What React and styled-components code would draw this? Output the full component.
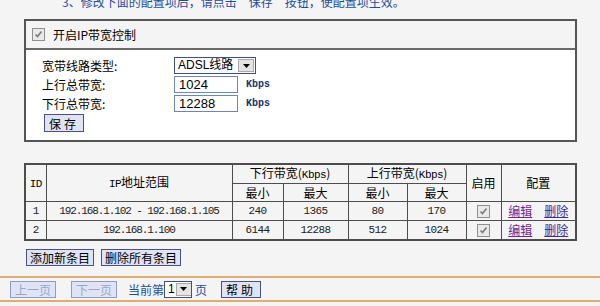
import styled, { createGlobalStyle } from 'styled-components';

const GlobalStyle = createGlobalStyle`
  html, body {
    margin: 0;
    padding: 0;
    background: #f4f4f4;
    overflow: hidden;
  }
  body {
    font-family: "Noto Sans CJK SC", "Noto Sans", sans-serif;
    font-size: 12px;
    color: #000;
  }
`;

const Page = styled.div`
  width: 600px;
  height: 306px;
  overflow: hidden;
`;

const Note = styled.div`
  margin-top: -5px;
  padding-left: 62px;
  height: 14px;
  line-height: 14px;
  color: #1f4d9e;
  font-size: 12px;
  white-space: nowrap;
`;

const Panel = styled.div`
  margin: 10px 23px 0 24px;
  border: 2px solid #555;
  background: #f4f4f4;
`;

const PanelHead = styled.div`
  height: 27px;
  display: flex;
  align-items: center;
  gap: 8px;
  padding-left: 6px;
  border-bottom: 2px solid #6a6a6a;
  box-shadow: 0 1px 0 #cfcfcf;
`;

const PanelBody = styled.div`
  background: #fff;
  padding: 7px 0 8px 16px;
  display: grid;
  grid-template-columns: 132px auto;
  row-gap: 2px;
  align-items: center;
  justify-content: start;
`;

const Label = styled.span`
  line-height: 17px;
  white-space: nowrap;
`;

const Field = styled.div`
  display: flex;
  align-items: center;
  gap: 8px;
`;

const Select = styled.div`
  display: flex;
  align-items: stretch;
  width: ${p => p.$w}px;
  height: ${p => p.$h}px;
  border: 1px solid #3c4f86;
  background: #fff;
  box-sizing: border-box;
  font-family: "Liberation Sans", "Noto Sans CJK SC", sans-serif;
  font-size: 12px;
  white-space: nowrap;
  overflow: hidden;
`;

const SelectText = styled.span`
  flex: 1;
  padding-left: 3px;
  line-height: ${p => p.$h - 2}px;
`;

const SelectArrow = styled.span`
  width: 14px;
  flex: none;
  margin: 1px;
  background: #e4e4e4;
  border: 1px solid #a9a9a9;
  display: flex;
  align-items: center;
  justify-content: center;
`;

const TextInput = styled.div`
  width: 64px;
  height: 17px;
  box-sizing: border-box;
  border: 1px solid #6d84c0;
  background: #fff;
  padding-left: 4px;
  font-family: "Liberation Sans", sans-serif;
  font-size: 13px;
  line-height: 15px;
`;

const Unit = styled.span`
  font-family: "Liberation Mono", monospace;
  font-weight: bold;
  font-size: 10px;
  color: #1a3170;
`;

const Button = styled.button`
  height: ${p => p.$h || 17}px;
  padding: 0 ${p => p.$px || 4}px;
  border: 1px solid ${p => (p.disabled ? '#8e9bc4' : '#4a4f86')};
  background: #dfe3f3;
  color: ${p => (p.disabled ? '#98a6cd' : '#000')};
  font-family: "Noto Sans CJK SC", sans-serif;
  font-size: 12px;
  line-height: 15px;
  letter-spacing: ${p => p.$ls || 0}px;
  white-space: nowrap;
  cursor: pointer;
`;

const SaveRow = styled.div`
  grid-column: 1 / 3;
  padding-left: 2px;
`;

const Table = styled.table`
  margin: 21px 0 0 24px;
  width: 553px;
  table-layout: fixed;
  border-collapse: collapse;
  border: 2px solid #4d4d4d;
  background: #f4f4f4;
`;

const Th = styled.th`
  border: 1px solid #4d4d4d;
  font-weight: normal;
  height: 17px;
  padding: 0;
  text-align: center;
  font-size: 12px;
  line-height: 16px;
  white-space: nowrap;
`;

const Td = styled.td`
  border: 1px solid #4d4d4d;
  height: 18px;
  padding: 0;
  text-align: center;
  font-family: "Liberation Mono", monospace;
  font-size: 11px;
  line-height: 16px;
  letter-spacing: ${p => p.$ls ?? -0.6}px;
  color: #222;
  white-space: nowrap;
`;

const Mono = styled.span`
  font-family: "Liberation Mono", monospace;
  font-size: 11px;
  letter-spacing: -0.5px;
`;

const Links = styled.div`
  display: flex;
  justify-content: center;
  gap: 12px;
  font-family: "Noto Sans CJK SC", sans-serif;
  font-size: 12px;
  letter-spacing: 0;
`;

const Link = styled.a`
  color: ${p => p.$c};
  text-decoration: underline;
  cursor: pointer;
`;

const Box = styled.span`
  display: inline-flex;
  width: 11px;
  height: 11px;
  border: 1px solid #8f8f8f;
  background: #e9e9e9;
  align-items: center;
  justify-content: center;
  vertical-align: middle;
`;

const Actions = styled.div`
  display: flex;
  gap: 7px;
  margin: 8px 0 0 26px;
`;

const Pager = styled.div`
  margin-top: 10px;
  height: 22px;
  border-top: 2px solid #e2ab70;
  border-bottom: 2px solid #e2ab70;
  display: flex;
  align-items: center;
  padding-left: 10px;
`;

const PagerText = styled.span`
  color: #1f4d9e;
  white-space: nowrap;
  margin: 0 ${p => p.$mr || 0}px 0 ${p => p.$ml || 0}px;
`;

const Arrow = () => (
  <svg width="7" height="4" viewBox="0 0 7 4">
    <path d="M0 0h7L3.5 4z" fill="#000" />
  </svg>
);

const Check = () => (
  <Box>
    <svg width="9" height="9" viewBox="0 0 9 9">
      <path d="M1.5 4.5l2 2 4-5" stroke="#7a7a7a" strokeWidth="1.6" fill="none" />
    </svg>
  </Box>
);

const rows = [
  { id: 1, range: '192.168.1.102 - 192.168.1.105', dmin: 240, dmax: 1365, umin: 80, umax: 170 },
  { id: 2, range: '192.168.1.100', dmin: 6144, dmax: 12288, umin: 512, umax: 1024 },
];

export default function App() {
  return (
    <Page>
      <GlobalStyle />
      <Note>3、修改下面的配置项后，请点击“保存”按钮，使配置项生效。</Note>

      <Panel>
        <PanelHead>
          <Check />
          <span>开启IP带宽控制</span>
        </PanelHead>
        <PanelBody>
          <Label>宽带线路类型:</Label>
          <Select $w={82} $h={17}>
            <SelectText $h={17}>ADSL线路</SelectText>
            <SelectArrow><Arrow /></SelectArrow>
          </Select>
          <Label>上行总带宽:</Label>
          <Field>
            <TextInput>1024</TextInput>
            <Unit>Kbps</Unit>
          </Field>
          <Label>下行总带宽:</Label>
          <Field>
            <TextInput>12288</TextInput>
            <Unit>Kbps</Unit>
          </Field>
          <SaveRow>
            <Button $ls={3} $h={18}>保存</Button>
          </SaveRow>
        </PanelBody>
      </Panel>

      <Table>
        <colgroup>
          <col style={{ width: 21 }} />
          <col style={{ width: 186 }} />
          <col style={{ width: 51 }} />
          <col style={{ width: 65 }} />
          <col style={{ width: 59 }} />
          <col style={{ width: 59 }} />
          <col style={{ width: 35 }} />
          <col />
        </colgroup>
        <thead>
          <tr>
            <Th rowSpan={2}><Mono>ID</Mono></Th>
            <Th rowSpan={2}><Mono>IP</Mono>地址范围</Th>
            <Th colSpan={2}>下行带宽(<Mono>Kbps</Mono>)</Th>
            <Th colSpan={2}>上行带宽(<Mono>Kbps</Mono>)</Th>
            <Th rowSpan={2}>启用</Th>
            <Th rowSpan={2}>配置</Th>
          </tr>
          <tr>
            <Th>最小</Th>
            <Th>最大</Th>
            <Th>最小</Th>
            <Th>最大</Th>
          </tr>
        </thead>
        <tbody>
          {rows.map(r => (
            <tr key={r.id}>
              <Td>{r.id}</Td>
              <Td $ls={-1.1}>{r.range}</Td>
              <Td>{r.dmin}</Td>
              <Td>{r.dmax}</Td>
              <Td>{r.umin}</Td>
              <Td>{r.umax}</Td>
              <Td><Check /></Td>
              <Td>
                <Links>
                  <Link $c="#7a1f8c">编辑</Link>
                  <Link $c="#3a2a9a">删除</Link>
                </Links>
              </Td>
            </tr>
          ))}
        </tbody>
      </Table>

      <Actions>
        <Button $px={3}>添加新条目</Button>
        <Button $px={3}>删除所有条目</Button>
      </Actions>

      <Pager>
        <Button disabled $px={4}>上一页</Button>
        <PagerText $ml={15}></PagerText>
        <Button disabled $px={4}>下一页</Button>
        <PagerText $ml={11}>当前第</PagerText>
        <Select $w={28} $h={17}>
          <SelectText $h={17}>1</SelectText>
          <SelectArrow><Arrow /></SelectArrow>
        </Select>
        <PagerText $ml={3} $mr={14}>页</PagerText>
        <Button $ls={3} $px={4}>帮助</Button>
      </Pager>
    </Page>
  );
}
